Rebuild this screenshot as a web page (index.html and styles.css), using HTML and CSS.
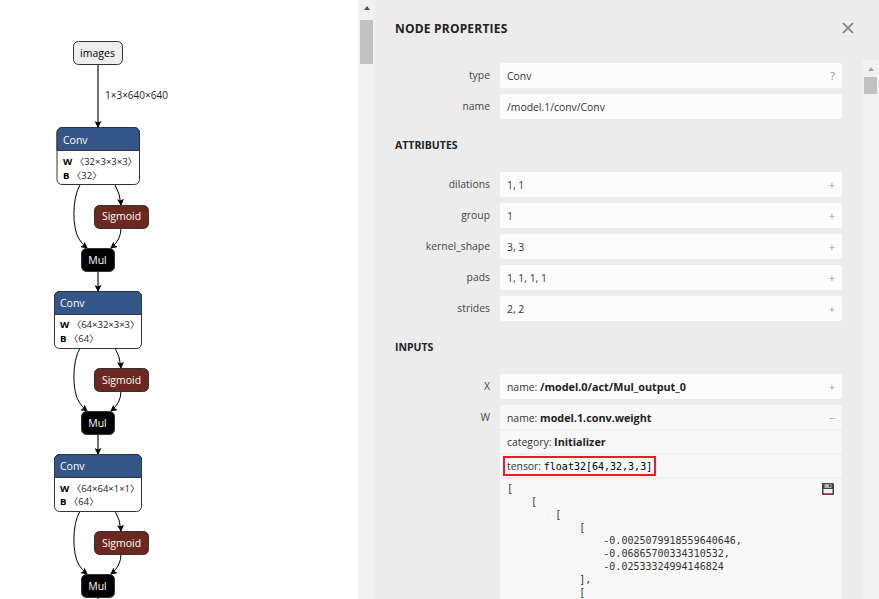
FILE: index.html
```html
<!DOCTYPE html>
<html lang="en">
<head>
<meta charset="utf-8">
<title>Node properties</title>
<link rel="stylesheet" href="styles.css">
</head>
<body>
<main class="app">
  <section class="canvas">
    <svg class="graph" width="358" height="599" viewBox="0 0 358 599">
      <defs>
        <marker id="arrow" markerWidth="7" markerHeight="7" refX="6" refY="3.5" orient="auto" markerUnits="userSpaceOnUse"><path d="M0 0 L7 3.5 L0 7 L1.5 3.5 Z" fill="#000"/></marker>
      </defs>
      <path class="edge heavy" d="M98 64V127" marker-end="url(#arrow)"/>
      <text class="edge-label" x="105" y="99">1×3×640×640</text>
      <g>
        <rect class="n-input" x="73.500" y="41.500" width="49" height="23" rx="5"/>
        <text class="n-label dark" x="97.500" y="57">images</text>
      </g>

      <g>
        <path class="edge" d="M80 185C72 198 72 228 79 239Q82 244 87 248" marker-end="url(#arrow)"/>
        <path class="edge" d="M115 185Q120 193 121 205" marker-end="url(#arrow)"/>
        <path class="edge" d="M121 228Q121 240 111 248" marker-end="url(#arrow)"/>
        <path class="edge heavy" d="M98 271V291" marker-end="url(#arrow)"/>
        <rect class="n-body" x="57" y="127.500" width="82.500" height="57" rx="5"/>
        <path class="n-head" d="M57 150.500V132.500a5 5 0 0 1 5-5h72.500a5 5 0 0 1 5 5V150.500Z"/>
        <text class="n-title" x="63" y="144">Conv</text>
        <text class="n-attr" x="63" y="165"><tspan class="bold">W</tspan> 〈32×3×3×3〉</text>
        <text class="n-attr" x="63" y="179"><tspan class="bold">B</tspan> 〈32〉</text>
        <rect class="n-sig" x="94.500" y="205.500" width="54" height="23" rx="5"/>
        <text class="n-label" x="121.500" y="220">Sigmoid</text>
        <rect class="n-mul" x="81.500" y="248.500" width="33" height="23" rx="5"/>
        <text class="n-label" x="97.500" y="264">Mul</text>
      </g>

      <g>
        <path class="edge" d="M80 348C72 361 72 391 79 402Q82 407 87 411" marker-end="url(#arrow)"/>
        <path class="edge" d="M115 348Q120 356 121 368" marker-end="url(#arrow)"/>
        <path class="edge" d="M121 391Q121 403 111 411" marker-end="url(#arrow)"/>
        <path class="edge heavy" d="M98 434V454" marker-end="url(#arrow)"/>
        <rect class="n-body" x="54.500" y="291.500" width="87" height="57" rx="5"/>
        <path class="n-head" d="M54.500 314.500V296.500a5 5 0 0 1 5-5h77a5 5 0 0 1 5 5V314.500Z"/>
        <text class="n-title" x="60" y="307">Conv</text>
        <text class="n-attr" x="60" y="328"><tspan class="bold">W</tspan> 〈64×32×3×3〉</text>
        <text class="n-attr" x="60" y="342"><tspan class="bold">B</tspan> 〈64〉</text>
        <rect class="n-sig" x="94.500" y="368.500" width="54" height="23" rx="5"/>
        <text class="n-label" x="121.500" y="384">Sigmoid</text>
        <rect class="n-mul" x="81.500" y="411.500" width="33" height="23" rx="5"/>
        <text class="n-label" x="97.500" y="427">Mul</text>
      </g>

      <g>
        <path class="edge" d="M80 511C72 524 72 554 79 565Q82 570 87 574" marker-end="url(#arrow)"/>
        <path class="edge" d="M115 511Q120 519 121 531" marker-end="url(#arrow)"/>
        <path class="edge" d="M121 554Q121 566 111 574" marker-end="url(#arrow)"/>
        <path class="edge heavy" d="M98 597V599"/>
        <rect class="n-body" x="54.500" y="454.500" width="87" height="57" rx="5"/>
        <path class="n-head" d="M54.500 477.500V459.500a5 5 0 0 1 5-5h77a5 5 0 0 1 5 5V477.500Z"/>
        <text class="n-title" x="60" y="470">Conv</text>
        <text class="n-attr" x="60" y="492"><tspan class="bold">W</tspan> 〈64×64×1×1〉</text>
        <text class="n-attr" x="60" y="505"><tspan class="bold">B</tspan> 〈64〉</text>
        <rect class="n-sig" x="94.500" y="531.500" width="54" height="23" rx="5"/>
        <text class="n-label" x="121.500" y="547">Sigmoid</text>
        <rect class="n-mul" x="81.500" y="574.500" width="33" height="23" rx="5"/>
        <text class="n-label" x="97.500" y="590">Mul</text>
      </g>
    </svg>
  </section>

  <div class="scrollbar">
    <span class="sb-arrow"></span>
    <span class="sb-thumb outer"></span>
  </div>

  <aside class="panel">
    <header class="panel-head">
      <h1 class="title">NODE PROPERTIES</h1>
      <svg class="close" width="12" height="12" viewBox="0 0 12 12"><path d="M1 1L11 11M11 1L1 11"/></svg>
    </header>
    <div class="panel-scroll">
      <div class="content">
        <div class="row"><div class="key">type</div><div class="val"><div class="line"><span>Conv</span><span class="mark">?</span></div></div></div>
        <div class="row"><div class="key">name</div><div class="val"><div class="line"><span>/model.1/conv/Conv</span></div></div></div>

        <h2 class="section">ATTRIBUTES</h2>
        <div class="row"><div class="key">dilations</div><div class="val"><div class="line"><span>1, 1</span><span class="mark">+</span></div></div></div>
        <div class="row"><div class="key">group</div><div class="val"><div class="line"><span>1</span><span class="mark">+</span></div></div></div>
        <div class="row"><div class="key">kernel_shape</div><div class="val"><div class="line"><span>3, 3</span><span class="mark">+</span></div></div></div>
        <div class="row"><div class="key">pads</div><div class="val"><div class="line"><span>1, 1, 1, 1</span><span class="mark">+</span></div></div></div>
        <div class="row"><div class="key">strides</div><div class="val"><div class="line"><span>2, 2</span><span class="mark">+</span></div></div></div>

        <h2 class="section">INPUTS</h2>
        <div class="row"><div class="key">X</div><div class="val"><div class="line"><span>name: <b>/model.0/act/Mul_output_0</b></span><span class="mark">+</span></div></div></div>
        <div class="row"><div class="key">W</div><div class="val tall">
          <div class="line first"><span>name: <b>model.1.conv.weight</b></span><span class="mark">−</span></div>
          <div class="line sub"><span>category: <b>Initializer</b></span></div>
          <div class="line sub"><span class="hl">tensor:&nbsp;<code>float32[64,32,3,3]</code></span></div>
          <div class="tensor">
            <svg class="save" width="12" height="12" viewBox="0 0 12 12"><path class="save-body" d="M0 0H11L12 1V12H0Z"/><path class="save-top" d="M2.500 1H9.500V5H2.500Z"/><path class="save-slot" d="M7 1.500H8.500V4H7Z"/><path class="save-low" d="M1.500 6H10.500V10.500H1.500Z"/><path class="save-base" d="M1 10.500H11V11.500H1Z"/></svg>
<pre class="tensor-text">[
    [
        [
            [
                -0.0025079918559640646,
                -0.06865700334310532,
                -0.02533324994146824
            ],
            [</pre>
          </div>
        </div></div>
      </div>
      <div class="scrollbar inner">
        <span class="sb-arrow"></span>
        <span class="sb-thumb small"></span>
      </div>
    </div>
  </aside>
</main>
</body>
</html>
```
FILE: styles.css
```css
* { box-sizing: border-box; }
html, body { margin: 0; height: 100%; overflow: hidden; background: #fff; }
body { font: 10.400px "Open Sans", "Noto Sans", sans-serif; color: #333; }
.app { display: flex; width: 879px; height: 599px; }
.canvas { width: 358px; flex: none; }
.graph { display: block; }
.edge { fill: none; stroke: #000; stroke-width: 1; }
.edge.heavy { stroke: #333; stroke-width: 1.4; }
.edge-label { font: 10px "Open Sans", sans-serif; fill: #222; }
.n-input { fill: #eee; stroke: #333; stroke-width: 1; }
.n-body { fill: #fff; stroke: #333; stroke-width: 1; }
.n-head { fill: #335588; stroke: #333; stroke-width: 1; }
.n-sig { fill: #6b2820; stroke: #333; stroke-width: 1; }
.n-mul { fill: #000; stroke: #333; stroke-width: 1; }
.n-label { font: 10.500px "Open Sans", sans-serif; fill: #fff; text-anchor: middle; }
.n-label.dark { fill: #000; }
.n-title { font: 10.500px "Open Sans", sans-serif; fill: #fff; }
.n-attr { font: 9.500px "Open Sans", "Noto Sans CJK SC", sans-serif; fill: #222; }
.bold { font-weight: 700; fill: #000; }
.scrollbar { width: 17px; flex: none; background: #f1f1f1; display: flex; flex-direction: column; align-items: center; }
.sb-arrow { width: 0; height: 0; margin-top: 6px; border: 3.500px solid transparent; border-top: 0; border-bottom: 4px solid #505050; }
.sb-thumb { width: 13px; margin-top: 10px; background: #c1c1c1; }
.sb-thumb.outer { height: 44px; }
.inner .sb-arrow { margin-top: 7px; border-bottom-color: #a3a3a3; }
.inner .sb-thumb { margin-top: 6px; }
.sb-thumb.small { height: 17px; }
.panel { flex: 1; min-width: 0; background: #ececec; display: flex; flex-direction: column; }
.panel-head { height: 60px; flex: none; display: flex; justify-content: space-between; align-items: flex-start; padding: 20px 25px 0 20px; }
.title { margin: 0; font-size: 12px; font-weight: 700; letter-spacing: .2px; color: #222; line-height: 18px; }
.close { margin-top: 2px; fill: none; stroke: #777; stroke-width: 1.600; }
.panel-scroll { flex: 1; min-height: 0; display: flex; }
.content { flex: 1; min-width: 0; padding: 3px 20px 0 0; overflow: hidden; }
.row { display: flex; margin-bottom: 6px; }
.key { width: 125px; flex: none; padding: 4px 10px 0 0; text-align: right; color: #444; line-height: 16px; }
.val { flex: 1; min-width: 0; background: #fcfcfc; border-radius: 2px; }
.val.tall { background: #f8f8f8; }
.line { height: 25px; padding: 0 7px; display: flex; justify-content: space-between; align-items: center; color: #333; }
.line.first { height: 24px; }
.sub { height: 24px; padding-bottom: 2px; border-top: 2px solid #f0f0f0; }
.line b { font-size: 10.800px; font-weight: 700; color: #222; }
.mark { color: #999; font-size: 11px; }
.section { margin: 0; height: 47px; padding: 11px 0 0 20px; font-size: 10.500px; font-weight: 700; color: #222; line-height: 18px; }
.hl { display: inline-flex; align-items: center; height: 20px; margin: 2px 0 0 -4px; border: 2px solid #ed1c24; padding: 0 2px; white-space: pre; }
code { font: 10px "DejaVu Sans Mono", monospace; color: #000; }
.tensor { position: relative; border-top: 2px solid #f0f0f0; padding: 3px 7px 0; height: 200px; }
.tensor-text { margin: 0; font: 10px/13px "DejaVu Sans Mono", monospace; color: #333; }
.save { position: absolute; top: 4px; right: 8px; }
.save-body { fill: #444; }
.save-top { fill: #b0b0b0; }
.save-slot { fill: #444; }
.save-low { fill: #f2f2f2; }
.save-base { fill: #c2185b; }
```
